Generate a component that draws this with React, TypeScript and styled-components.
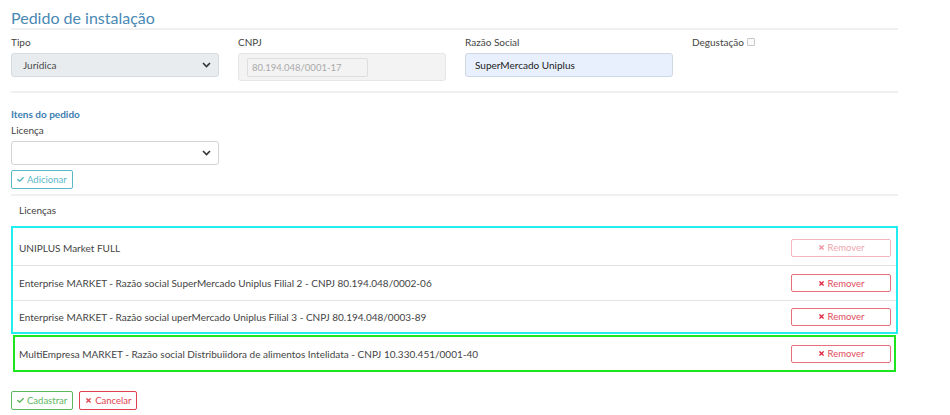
import React from 'react';
import styled, { createGlobalStyle } from 'styled-components';
import { FaCheck, FaTimes } from 'react-icons/fa';

const GlobalStyle = createGlobalStyle`
  body {
    margin: 0;
    background: #fff;
    font-family: Lato, "Open Sans", sans-serif;
    color: #444;
  }
`;

const Page = styled.div`
  width: 887px;
  padding: 8px 0 0 11px;
`;

const Title = styled.h1`
  margin: 0;
  font-size: 16px;
  font-weight: 400;
  color: #4a89b3;
  line-height: 20px;
  border-bottom: 2px solid #f0f0f0;
`;

const FormRow = styled.div`
  display: grid;
  grid-template-columns: repeat(4, 208px);
  column-gap: 19px;
  padding: 5px 0 10px;
  border-bottom: 2px solid #f0f0f0;
`;

const Field = styled.div`
  display: flex;
  flex-direction: column;
`;

const Label = styled.label`
  font-size: 10px;
  line-height: 14px;
  height: 14px;
  margin-bottom: 4px;
  color: #444;
  display: flex;
  align-items: center;
  gap: 3px;
`;

const Check = styled.span`
  width: 6px;
  height: 6px;
  border: 1px solid #c8c8c8;
  border-radius: 1px;
  background: #fafafa;
`;

const SelectBox = styled.div<{ $disabled?: boolean }>`
  height: 24px;
  box-sizing: border-box;
  border: 1px solid ${(p) => (p.$disabled ? '#d6dbe0' : '#d3d3d3')};
  border-radius: 3px;
  background: ${(p) => (p.$disabled ? '#e9ecef' : '#fff')};
  display: flex;
  align-items: center;
  justify-content: space-between;
  padding: 0 7px 0 11px;
  font-size: 10px;
  color: #4a4a4a;
`;

const DisabledWrap = styled.div`
  height: 28px;
  box-sizing: border-box;
  border: 1px solid #e6e6e6;
  border-radius: 3px;
  background: #f3f3f3;
  padding: 4px 0 0 8px;
`;

const InnerInput = styled.div`
  width: 121px;
  height: 19px;
  box-sizing: border-box;
  border: 1px solid #dedede;
  border-radius: 2px;
  padding-left: 4px;
  display: flex;
  align-items: center;
  font-size: 9.5px;
  color: #aaa;
`;

const TextInput = styled.div`
  height: 24px;
  box-sizing: border-box;
  border: 1px solid #d0d8e4;
  border-radius: 3px;
  background: #e8f0fe;
  padding-left: 9px;
  display: flex;
  align-items: center;
  font-size: 10px;
  color: #222;
`;

const Section = styled.div`
  padding-top: 14px;
  width: 208px;
`;

const SectionTitle = styled.div`
  font-size: 10px;
  font-weight: 700;
  color: #3b7db0;
  line-height: 14px;
  margin-bottom: 2px;
`;

const Buttons = styled.div<{ $top?: number }>`
  display: flex;
  gap: 6px;
  margin-top: ${(p) => p.$top ?? 0}px;
`;

const Btn = styled.button<{ $tone: string; $faded?: boolean }>`
  height: 19px;
  box-sizing: border-box;
  border: 1px solid ${(p) => p.$tone};
  border-radius: 2px;
  background: #fff;
  color: ${(p) => p.$tone};
  font-family: Lato, "Open Sans", sans-serif;
  font-size: 9.5px;
  padding: 0 5px;
  display: inline-flex;
  align-items: center;
  justify-content: center;
  gap: 3px;
  opacity: ${(p) => (p.$faded ? 0.5 : 1)};
  svg {
    width: 7px;
    height: 7px;
  }
`;

const RemoveBtn = styled(Btn)`
  width: 100px;
  height: 18px;
  color: #e04c5c;
  svg {
    color: #e0243c;
  }
`;

const Divider = styled.div`
  border-bottom: 2px solid #f0f0f0;
  margin-top: 5px;
`;

const TableHead = styled.div`
  padding: 8px 0 0 8px;
  height: 22px;
  font-size: 10px;
  line-height: 12px;
`;

const Group = styled.div<{ $color: string; $inset?: number; $top?: number }>`
  border: 2px solid ${(p) => p.$color};
  margin: 0 ${(p) => p.$inset ?? 0}px;
  padding-top: ${(p) => p.$top ?? 0}px;
`;

const Row = styled.div<{ $h?: number; $left?: number; $right?: number }>`
  box-sizing: border-box;
  height: ${(p) => p.$h ?? 35}px;
  display: flex;
  align-items: center;
  justify-content: space-between;
  padding: 0 ${(p) => p.$right ?? 5}px 0 ${(p) => p.$left ?? 6}px;
  font-size: 10px;
  color: #444;
  & + & {
    border-top: 1px solid #e3e3e3;
  }
  &:last-child {
    height: ${(p) => (p.$h ?? 35) - 3}px;
  }
`;

const GroupGap = styled.div`
  height: 1px;
`;

const Footer = styled.div`
  padding-top: 19px;
`;

const Chevron = () => (
  <svg width="9" height="6" viewBox="0 0 9 6">
    <path d="M1 1l3.5 3.5L8 1" fill="none" stroke="#333" strokeWidth="1.6" />
  </svg>
);

const licencas = [
  { text: 'UNIPLUS Market FULL', faded: true },
  { text: 'Enterprise MARKET - Razão social SuperMercado Uniplus Filial 2 - CNPJ 80.194.048/0002-06' },
  { text: 'Enterprise MARKET - Razão social uperMercado Uniplus Filial 3 - CNPJ 80.194.048/0003-89' },
];

const App = () => {
  return (
    <Page>
      <GlobalStyle />
      <Title>Pedido de instalação</Title>
      <FormRow>
        <Field>
          <Label>Tipo</Label>
          <SelectBox $disabled>
            <span>Jurídica</span>
            <Chevron />
          </SelectBox>
        </Field>
        <Field>
          <Label>CNPJ</Label>
          <DisabledWrap>
            <InnerInput>80.194.048/0001-17</InnerInput>
          </DisabledWrap>
        </Field>
        <Field>
          <Label>Razão Social</Label>
          <TextInput>SuperMercado Uniplus</TextInput>
        </Field>
        <Field>
          <Label>
            Degustação <Check />
          </Label>
        </Field>
      </FormRow>

      <Section>
        <SectionTitle>Itens do pedido</SectionTitle>
        <Label>Licença</Label>
        <SelectBox>
          <span />
          <Chevron />
        </SelectBox>
        <Buttons $top={5}>
          <Btn $tone="#5ab8c9">
            <FaCheck /> Adicionar
          </Btn>
        </Buttons>
      </Section>
      <Divider />

      <TableHead>Licenças</TableHead>
      <Group $color="#22eef2" $top={2}>
        {licencas.map((l) => (
          <Row key={l.text}>
            <span>{l.text}</span>
            <RemoveBtn $tone="#e8707c" $faded={l.faded}>
              <FaTimes /> Remover
            </RemoveBtn>
          </Row>
        ))}
      </Group>
      <GroupGap />
      <Group $color="#1ee61e" $inset={2}>
        <Row $h={36} $left={4} $right={3}>
          <span>MultiEmpresa MARKET - Razão social Distribuiidora de alimentos Intelidata - CNPJ 10.330.451/0001-40</span>
          <RemoveBtn $tone="#e8707c">
            <FaTimes /> Remover
          </RemoveBtn>
        </Row>
      </Group>

      <Footer>
        <Buttons>
          <Btn $tone="#5cb85c">
            <FaCheck /> Cadastrar
          </Btn>
          <Btn $tone="#e0414f">
            <FaTimes /> Cancelar
          </Btn>
        </Buttons>
      </Footer>
    </Page>
  );
};

export default App;
